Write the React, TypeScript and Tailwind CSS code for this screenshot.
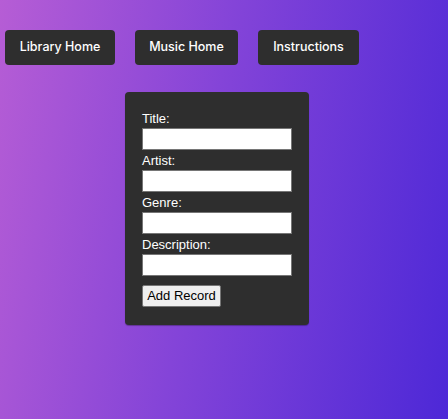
export default function App() {
  const fields = ['Title:', 'Artist:', 'Genre:', 'Description:'];
  const navBtn = "h-[35px] rounded bg-[#2e2e2e] font-['Inter',sans-serif] text-[12.5px] font-medium text-white";

  return (
    <div className="min-h-[419px] w-full bg-[linear-gradient(100deg,#b65dd5_0%,#8444d8_45%,#4d28d7_100%)] pt-[30px] font-['Liberation_Sans',Arial,sans-serif]">
      <nav className="flex gap-5 pl-[5px]">
        <button className={`${navBtn} w-[110px]`}>Library Home</button>
        <button className={`${navBtn} w-[103px]`}>Music Home</button>
        <button className={`${navBtn} w-[101px]`}>Instructions</button>
      </nav>

      <form className="ml-[125px] mt-[27px] w-[184px] rounded bg-[#2e2e2e] px-[17px] pt-4 pb-[18px] shadow-[0_1px_1px_rgba(0,0,0,0.3)]">
        {fields.map((f) => (
          <div key={f}>
            <label className="block h-5 pt-[3px] text-[13px] leading-[15px] text-white">{f}</label>
            <input className="block h-[22px] w-[150px] border border-[#767676] bg-white" />
          </div>
        ))}
        <button
          type="button"
          className="mt-[9px] h-[22px] w-[79px] rounded-[2px] border border-[#767676] bg-[#efefef] text-[13px] text-black"
        >
          Add Record
        </button>
      </form>
    </div>
  );
}
